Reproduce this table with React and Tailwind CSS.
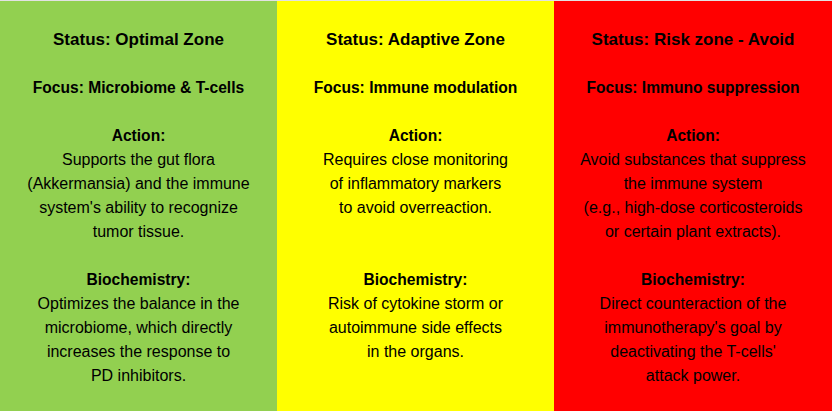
import React from "react";

const cols = [
  {
    bg: "bg-[#92d050]",
    w: "w-[277px]",
    title: "Status: Optimal Zone",
    focus: "Focus: Microbiome & T-cells",
    action: ["Supports the gut flora", "(Akkermansia) and the immune", "system's ability to recognize", "tumor tissue."],
    bio: ["Optimizes the balance in the", "microbiome, which directly", "increases the response to", "PD inhibitors."],
  },
  {
    bg: "bg-[#ffff00]",
    w: "w-[277px]",
    title: "Status: Adaptive Zone",
    focus: "Focus: Immune modulation",
    action: ["Requires close monitoring", "of inflammatory markers", "to avoid overreaction.", ""],
    bio: ["Risk of cytokine storm or", "autoimmune side effects", "in the organs."],
  },
  {
    bg: "bg-[#ff0000]",
    w: "w-[278px]",
    title: "Status: Risk zone - Avoid",
    focus: "Focus: Immuno suppression",
    action: ["Avoid substances that suppress", "the immune system", "(e.g., high-dose corticosteroids", "or certain plant extracts)."],
    bio: ["Direct counteraction of the", "immunotherapy's goal by", "deactivating the T-cells'", "attack power."],
  },
];

function Line({ children, className = "" }) {
  return <div className={`h-[24px] leading-[24px] whitespace-nowrap ${className}`}>{children || "\u00a0"}</div>;
}

export default function App() {
  return (
    <div className="flex w-[832px] h-[411px] overflow-hidden text-black border-t border-t-[#d6d6d6]/70 font-['Liberation_Sans',Arial,sans-serif]">
      {cols.map((c, i) => (
        <div key={i} className={`${c.bg} ${c.w} flex flex-col items-center pt-[26.5px] text-[16px] text-center`}>
          <Line className="font-bold text-[17px]">{c.title}</Line>
          <Line />
          <Line className="font-bold text-[15.6px]">{c.focus}</Line>
          <Line />
          <Line className="font-bold text-[15.6px]">Action:</Line>
          {c.action.map((t, j) => (
            <Line key={j}>{t}</Line>
          ))}
          <Line />
          <Line className="font-bold text-[15.6px]">Biochemistry:</Line>
          {c.bio.map((t, j) => (
            <Line key={j}>{t}</Line>
          ))}
        </div>
      ))}
    </div>
  );
}
